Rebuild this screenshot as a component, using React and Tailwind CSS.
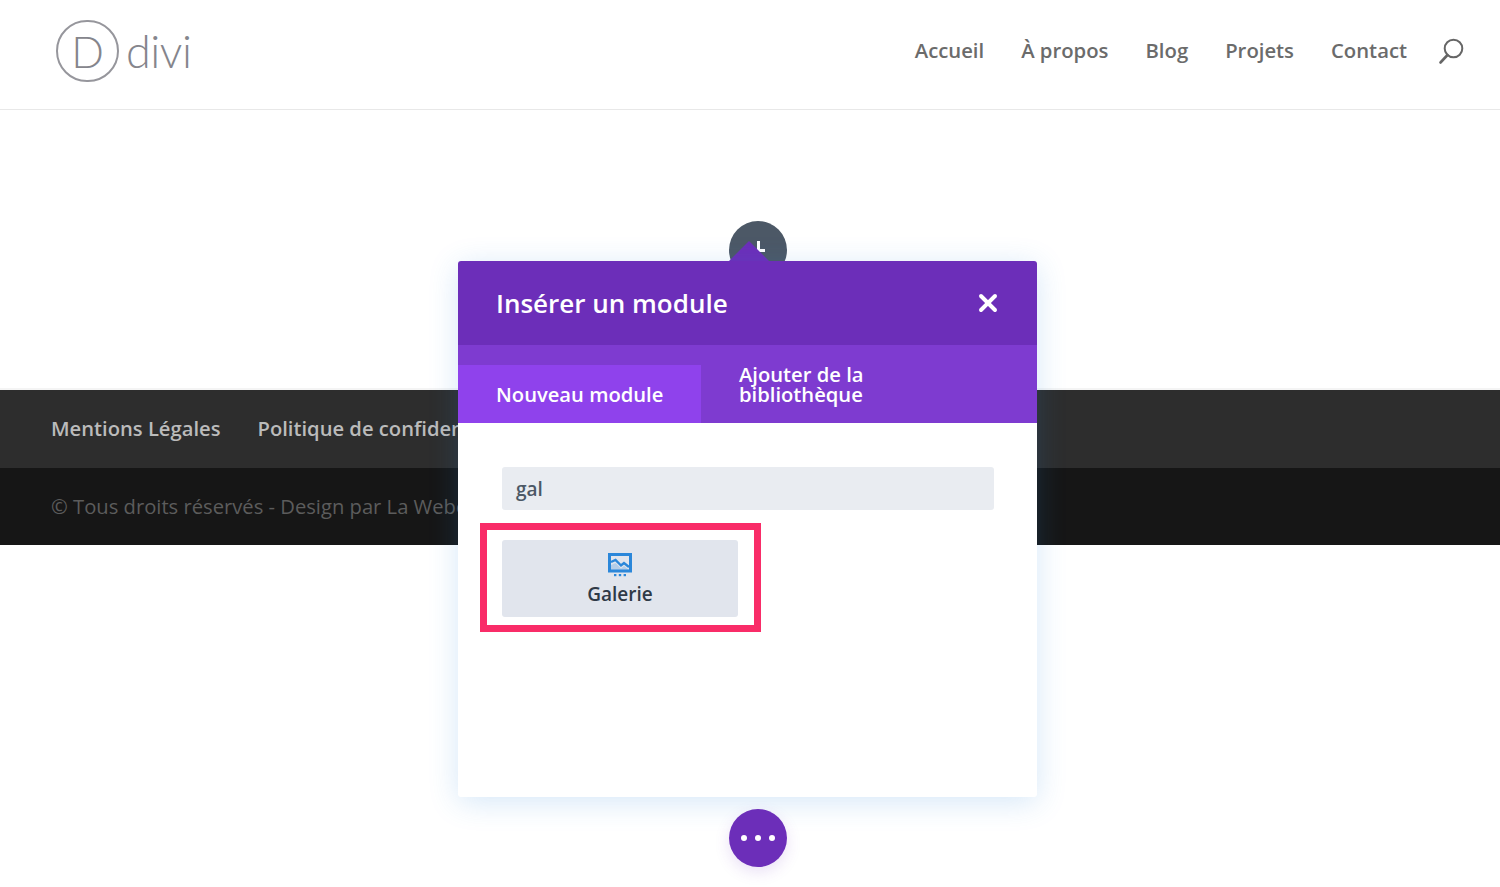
import React from 'react';
import { X } from 'lucide-react';

const navLinks = ['Accueil', 'À propos', 'Blog', 'Projets', 'Contact'];

const SearchIcon = () => (
  <svg width="27" height="27" viewBox="0 0 27 27" fill="none" stroke="#666666" strokeWidth="2" strokeLinecap="round" className="-ml-[6px]">
    <circle cx="15.5" cy="10.5" r="8.8" />
    <path d="M9.5 17 L2.5 24.5" strokeWidth="2.6" />
  </svg>
);

const GalleryIcon = () => (
  <svg width="24" height="24" viewBox="0 0 24 24" fill="none" className="block">
    <rect x="1.5" y="1.5" width="21" height="16.5" stroke="#2b87da" strokeWidth="3" />
    <path d="M3 9 L7.5 7 L13 12.5 L16 10 L21 14" stroke="#2b87da" strokeWidth="2.4" fill="none" />
    <path d="M3 12 L7.5 10 L13 15.5 L16 13 L21 17 H3 Z" fill="#2b87da" opacity="0.25" />
    <rect x="6" y="21" width="2.4" height="2.2" fill="#2b87da" />
    <rect x="10.8" y="21" width="2.4" height="2.2" fill="#2b87da" />
    <rect x="15.6" y="21" width="2.4" height="2.2" fill="#2b87da" />
  </svg>
);

const Header = () => (
  <header className="h-[110px] border-b border-[#e8e8e8] bg-white flex items-center justify-between pl-[56px] pr-[35px]">
    <div className="flex items-center gap-[7px] pb-[7px] text-[#85858c] font-['Lato',sans-serif] font-light">
      <div className="w-[63px] h-[62px] rounded-full border-[2px] border-[#96969c] flex items-center justify-center text-[43px] leading-none">
        D
      </div>
      <span className="text-[45px] leading-none tracking-[-0.5px]">divi</span>
    </div>
    <nav className="flex items-center gap-[37px] pb-[6px] text-[20.3px] font-semibold text-[#6b6b6b]">
      {navLinks.map((link) => (
        <a key={link} href="#" className="leading-none pb-[2px]">{link}</a>
      ))}
      <SearchIcon />
    </nav>
  </header>
);

const Footer = () => (
  <footer className="mt-[278px]">
    <div className="h-[2px] bg-[#f4f4f4]" />
    <div className="h-[78px] bg-[#2d2d2d] flex items-center gap-[37px] pl-[51px] pb-[2px] text-[20.2px] font-semibold text-[#bbbbbb]">
      <a href="#">Mentions Légales</a>
      <a href="#">Politique de confidentialité</a>
    </div>
    <div className="h-[77px] bg-[#161616] flex items-center pl-[51px] text-[20.2px] text-[#5c5c5c]">
      © Tous droits réservés - Design par La Webeuse
    </div>
  </footer>
);

const ModuleModal = () => (
  <div className="absolute left-[458px] top-[261px] w-[579px] h-[536px] bg-white rounded-[3px] shadow-[0_5px_30px_rgba(43,135,218,0.2)] flex flex-col">
    <div className="h-[84px] shrink-0 bg-[#6c2eb9] rounded-t-[3px] flex items-center justify-between pl-[38px] pr-[35px] text-white">
      <h2 className="text-[26px] font-semibold leading-none">Insérer un module</h2>
      <X size={28} strokeWidth={3.4} />
    </div>
    <div className="h-[78px] shrink-0 bg-[#7e3bd0] flex items-end text-white text-[20.2px] font-semibold">
      <div className="w-[243px] h-[58px] bg-[#8f42ec] flex items-center pl-[38px]">Nouveau module</div>
      <div className="pl-[38px] pb-[19px] leading-[20px]">
        Ajouter de la<br />bibliothèque
      </div>
    </div>
    <div className="pt-[44px] pl-[22px]">
      <div className="ml-[22px] w-[492px] h-[43px] bg-[#e9ecf1] rounded-[3px] flex items-center pl-[14px] pt-[1px] text-[19px] font-semibold text-[#4c5866]">
        gal
      </div>
      <div className="mt-[13px] w-[281px] h-[109px] border-[7px] border-[#f92c68] pt-[10px] pl-[15px]">
        <div className="w-[236px] h-[77px] bg-[#e1e5ed] rounded-[3px] flex flex-col items-center pt-[13px]">
          <GalleryIcon />
          <span className="text-[19px] font-semibold text-[#2f3a47] leading-none mt-[8px]">Galerie</span>
        </div>
      </div>
    </div>
  </div>
);

export default function App() {
  return (
    <div className="relative h-[887px] overflow-hidden bg-white font-['Open_Sans',sans-serif]">
      <Header />
      <Footer />

      {/* Add button behind the modal, its plus is mostly covered */}
      <div className="absolute left-[729px] top-[221px] w-[58px] h-[58px] rounded-full bg-[#4c5866]">
        <div className="absolute left-[28px] top-[20px] w-[3px] h-[12px] bg-white" />
        <div className="absolute left-[28px] top-[28px] w-[8px] h-[3px] bg-white" />
      </div>
      <div className="absolute left-[729px] top-[241px] w-0 h-0 border-l-[20px] border-r-[20px] border-b-[20px] border-l-transparent border-r-transparent border-b-[#6c2eb9]" />

      <ModuleModal />

      <div className="absolute left-[729px] top-[809px] w-[58px] h-[58px] rounded-full bg-[#6c2eb9] shadow-[0_5px_15px_rgba(108,46,185,0.15)] flex items-center justify-center gap-[8px]">
        <span className="w-[6px] h-[6px] rounded-full bg-white" />
        <span className="w-[6px] h-[6px] rounded-full bg-white" />
        <span className="w-[6px] h-[6px] rounded-full bg-white" />
      </div>
    </div>
  );
}
